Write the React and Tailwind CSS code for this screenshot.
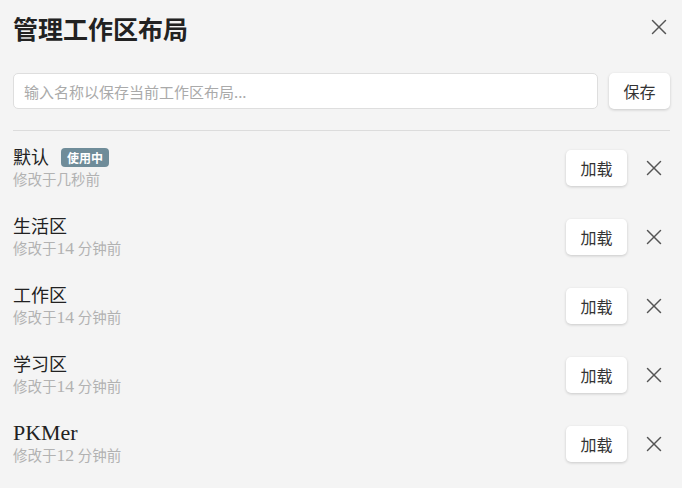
import React from 'react';

const serif = { fontFamily: '"Liberation Serif", "Noto Sans CJK SC", serif' };

const Cross = ({ className = '' }) => (
    <svg width="16" height="16" viewBox="0 0 16 16" fill="none" stroke="currentColor" strokeWidth="1.5" strokeLinecap="round" className={className}>
        <line x1="1.5" y1="1.5" x2="14.5" y2="14.5" />
        <line x1="14.5" y1="1.5" x2="1.5" y2="14.5" />
    </svg>
);

// latin runs render a bit larger than the CJK fallback, as in the original
const Mixed = ({ text }) =>
    text.split(/([A-Za-z0-9]+)/).map((part, i) =>
        /^[A-Za-z0-9]+$/.test(part) ? (
            <span key={i} className="text-[1.22em] leading-none">{part}</span>
        ) : (
            <React.Fragment key={i}>{part}</React.Fragment>
        )
    );

const layouts = [
    { name: '默认', time: '修改于几秒前', active: true },
    { name: '生活区', time: '修改于14 分钟前' },
    { name: '工作区', time: '修改于14 分钟前' },
    { name: '学习区', time: '修改于14 分钟前' },
    { name: 'PKMer', time: '修改于12 分钟前' },
];

const Button = ({ children }) => (
    <button className="h-9 px-[14.5px] rounded-[5px] bg-white text-[16px] text-[#333] shadow-[0_1px_3px_rgba(0,0,0,0.18)] font-['Noto_Sans_CJK_SC',sans-serif]">
        {children}
    </button>
);

export default function App() {
    return (
        <div className="w-[682px] h-[488px] bg-[#f4f4f4] overflow-hidden pl-[13px] pr-[12px] pt-[16px]" style={serif}>
            {/* Header */}
            <div className="flex items-center justify-between h-[30px]">
                <h1 className="text-[25px] font-bold text-[#222] leading-[30px]">管理工作区布局</h1>
                <button className="text-[#555] mr-[3px] -mt-[8px]">
                    <Cross />
                </button>
            </div>

            {/* Save input */}
            <div className="flex gap-[11px] mt-[27px]">
                <input
                    placeholder="输入名称以保存当前工作区布局..."
                    className="flex-1 h-9 rounded-[5px] bg-white border border-[#dedede] px-[10px] text-[15px] text-[#333] placeholder:text-[#aaa] outline-none font-['Noto_Sans_CJK_SC',sans-serif]"
                />
                <Button>保存</Button>
            </div>

            <div className="mt-[21px] border-t border-[#dcdcdc]" />

            {/* Layout list */}
            <div className="mt-[2px] flex flex-col">
                {layouts.map((l) => (
                    <div key={l.name} className="h-[69px] flex items-center justify-between">
                        <div className="flex flex-col">
                            <div className="flex items-center gap-[12px] h-[24px]">
                                <span className="text-[18px] leading-[24px] text-[#222]"><Mixed text={l.name} /></span>
                                {l.active && (
                                    <span className="px-[6px] h-[19px] flex items-center rounded-[4px] bg-[#6f8c99] text-white text-[12px] font-bold font-['Noto_Sans_CJK_SC',sans-serif]">
                                        使用中
                                    </span>
                                )}
                            </div>
                            <span className="text-[14.5px] leading-[20px] h-[20px] text-[#b2b2b2]"><Mixed text={l.time} /></span>
                        </div>
                        <div className="flex items-center gap-[19px]">
                            <Button>加载</Button>
                            <button className="text-[#555] mr-[8px]">
                                <Cross />
                            </button>
                        </div>
                    </div>
                ))}
            </div>
        </div>
    );
}
